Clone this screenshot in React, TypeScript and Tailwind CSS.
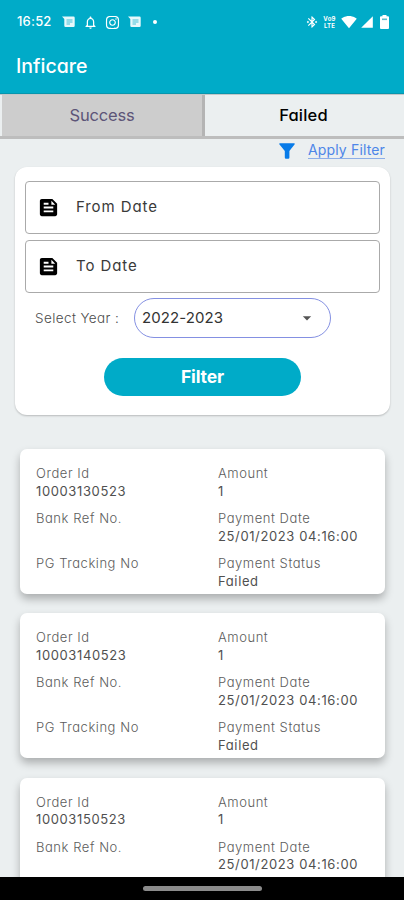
import React from "react";
import { FaInstagram } from "react-icons/fa";
import {
    MdArrowDropDown,
    MdBluetoothConnected,
    MdFeed,
    MdNotificationsNone,
    MdSignalCellular4Bar,
    MdSignalWifi4Bar,
} from "react-icons/md";

type Order = {
    id: string;
    amount: string;
    date: string;
    status?: string;
};

const orders: Order[] = [
    { id: "10003130523", amount: "1", date: "25/01/2023 04:16:00", status: "Failed" },
    { id: "10003140523", amount: "1", date: "25/01/2023 04:16:00", status: "Failed" },
    { id: "10003150523", amount: "1", date: "25/01/2023 04:16:00" },
];

const MessageIcon = () => (
    <svg width="13" height="12" viewBox="0 0 13 12" fill="none">
        <path d="M0 0.5h11.5q1.2 0 1.2 1.2v8.1q0 1.2-1.2 1.2H3.5q-1.2 0-1.2-1.2V3z" fill="#e6f8fb" />
        <path d="M4.5 4h6M4.5 6h6M4.5 8h3.5" stroke="#00abc8" strokeWidth="0.7" />
    </svg>
);

const BatteryIcon = () => (
    <svg width="9" height="14" viewBox="0 0 9 14">
        <path d="M2.5 0h4v1.3H8q1 0 1 1V13q0 1-1 1H1q-1 0-1-1V2.3q0-1 1-1h1.5z" fill="#fff" />
        <path d="M2 3.5h5v1.6H2z" fill="#5cbccb" />
    </svg>
);

const FunnelIcon = () => (
    <svg width="16" height="16" viewBox="0 0 16 16" fill="#087be8">
        <path d="M0.8 0.3h14.4q0.9 0 0.5 1L10.4 8v6.5q0 1.2-1.2 1.2H7q-1.2 0-1.2-1.2V8L0.3 1.3q-0.4-1 0.5-1z" />
    </svg>
);

const StatusBar = () => (
    <div className="flex h-11 items-center pl-[17px] pr-[15px]">
        <span className="w-[45px] text-[13px] font-medium tracking-[0.2px]">16:52</span>
        <MessageIcon />
        <MdNotificationsNone className="ml-[8px]" size={15} />
        <FaInstagram className="ml-[7px]" size={15} />
        <span className="ml-[8px]">
            <MessageIcon />
        </span>
        <span className="ml-[12px] size-1 rounded-full bg-white" />
        <div className="ml-auto flex items-center">
            <MdBluetoothConnected size={14} />
            <div className="ml-[3px] flex w-[15px] flex-col items-center text-[6px] font-bold leading-[7px] tracking-[0.2px]">
                <span>Vo9</span>
                <span>LTE</span>
            </div>
            <MdSignalWifi4Bar className="ml-[4px]" size={16} />
            <MdSignalCellular4Bar className="ml-[3px]" size={14} />
            <span className="ml-[6px]">
                <BatteryIcon />
            </span>
        </div>
    </div>
);

const DateField = ({ label }: { label: string }) => (
    <div className="flex h-[53px] items-center rounded-[4px] border border-[#aaaaaa] pl-[11px]">
        <MdFeed className="text-black" size={23} />
        <span className="ml-[16px] pb-px text-[15px] tracking-[0.9px] text-[#3a3a3a]">{label}</span>
    </div>
);

const FilterCard = () => (
    <section className="ml-[15px] mr-[14px] mt-[5px] h-[248px] shrink-0 rounded-[12px] bg-white px-[10px] pt-[14px] shadow-[0_1px_2px_rgba(0,0,0,0.22)]">
        <div className="flex flex-col gap-[6px]">
            <DateField label="From Date" />
            <DateField label="To Date" />
        </div>
        <div className="mt-[5px] flex h-[40px] items-center pl-[10px]">
            <span className="w-[99px] whitespace-nowrap pt-px text-[13.5px] font-light tracking-[0.4px] text-[#4c4c4c]">
                Select Year :
            </span>
            <button className="flex h-[40px] w-[197px] items-center justify-between rounded-full border border-[#8490e2] pl-[7px] pr-[13px]">
                <span className="text-[15px] tracking-[0.1px] text-[#333]">2022-2023</span>
                <MdArrowDropDown className="text-[#555]" size={20} />
            </button>
        </div>
        <button className="ml-[79px] mt-[20px] flex h-[38px] w-[197px] items-center justify-center rounded-full bg-[#00abc8] text-[17.5px] font-bold tracking-[-0.1px] text-white">
            Filter
        </button>
    </section>
);

const Field = ({ label, value }: { label: string; value?: string }) => (
    <div className="h-[35px] whitespace-nowrap text-[13px] leading-[17.5px]">
        <div className="font-light tracking-[0.55px] text-[#5c5c5c]">{label}</div>
        <div className="tracking-[0.62px] text-[#505050]">{value}</div>
    </div>
);

const OrderCard = ({ order }: { order: Order }) => (
    <article className="grid h-[145px] shrink-0 grid-cols-[182px_1fr] content-start gap-y-[10px] rounded-[7px] bg-white pl-4 pt-[16px] shadow-[0_5px_9px_rgba(0,0,0,0.27)]">
        <Field label="Order Id" value={order.id} />
        <Field label="Amount" value={order.amount} />
        <Field label="Bank Ref No." />
        <Field label="Payment Date" value={order.date} />
        {order.status && (
            <>
                <Field label="PG Tracking No" />
                <Field label="Payment Status" value={order.status} />
            </>
        )}
    </article>
);

const App = () => {
    return (
        <div className="flex h-[900px] w-[404px] flex-col overflow-hidden bg-[#ebeff0] font-['Inter',sans-serif] [font-feature-settings:'cv11']">
            <header className="h-[94px] shrink-0 border-b border-[#0795ad] bg-[#00abc8] text-white">
                <StatusBar />
                <h1 className="pl-4 pt-[7px] text-[19.5px] font-medium leading-[30px]">Inficare</h1>
            </header>

            <nav className="flex h-[45px] shrink-0 border-b-[3px] border-t border-b-[#bdbdbd] border-t-[#c3c7c8] pl-[2px] text-[16.5px]">
                <button className="w-[200px] bg-[#cdcdcd] text-[#5d5578] tracking-[-0.2px]">Success</button>
                <button className="flex-1 border-l-[3px] border-[#b4b4b4] pr-[2px] font-medium text-black tracking-[0.2px]">
                    Failed
                </button>
            </nav>

            <main className="flex min-h-0 flex-1 flex-col overflow-hidden">
                <div className="flex h-[23px] shrink-0 items-center justify-end pr-[19px]">
                    <FunnelIcon />
                    <a className="ml-[13px] border-b border-[#8caee8] text-[14px] leading-[16px] tracking-[0.15px] text-[#4d86e8]">
                        Apply Filter
                    </a>
                </div>
                <FilterCard />
                <div className="mt-[34px] flex flex-col gap-[19.4px] pl-5 pr-[19px]">
                    {orders.map((order) => (
                        <OrderCard key={order.id} order={order} />
                    ))}
                </div>
            </main>

            <footer className="flex h-[23px] shrink-0 items-center justify-center bg-black">
                <div className="h-[5px] w-[119px] rounded-full bg-[#8b8b8b]" />
            </footer>
        </div>
    );
};

export default App;
